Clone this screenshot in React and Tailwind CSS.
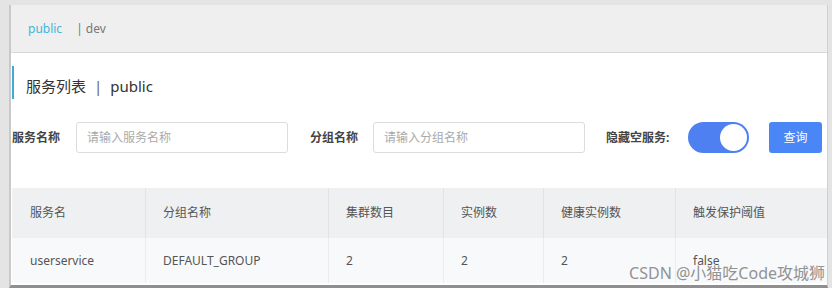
export default function App() {
  const font = { fontFamily: '"Noto Sans", "Noto Sans CJK SC", sans-serif' };
  const cols = [
    { w: 'w-[133px]', h: '服务名', v: 'userservice' },
    { w: 'w-[183px]', h: '分组名称', v: 'DEFAULT_GROUP' },
    { w: 'w-[115px]', h: '集群数目', v: '2' },
    { w: 'w-[100px]', h: '实例数', v: '2' },
    { w: 'w-[132px]', h: '健康实例数', v: '2' },
    { w: 'flex-1', h: '触发保护阈值', v: 'false' },
  ];
  return (
    <div className="w-[832px] h-[288px] bg-[#e4e4e4] pl-[9px] pt-[5px] pr-[4px] pb-0 overflow-hidden" style={font}>
      <div className="relative h-full overflow-hidden bg-white border-l-2 border-[#c9c9c9] border-b-[3px] border-b-[#8f8f8f] border-r border-r-[#d0d0d0] flex flex-col">
        <div className="h-[48px] shrink-0 bg-[#efefef] border-b border-[#d8d8d8] flex items-center pl-[17px] text-[12px]">
          <span className="text-[#3fb4d9]">public</span>
          <span className="ml-[14px] text-[#777]">| dev</span>
        </div>
        <div className="mt-[13px] shrink-0 flex items-stretch h-[33px]">
          <div className="w-[2px] bg-[#3fa9d8] ml-px"></div>
          <div className="pl-[12px] pt-[10px] text-[15px] text-[#333] leading-[20px]">
            服务列表<span className="mx-[8px] text-[#666]">|</span>public
          </div>
        </div>
        <div className="mt-[23px] shrink-0 flex items-center h-[31px] text-[12px]">
          <span className="ml-px w-[64px] font-bold text-[#444]">服务名称</span>
          <div className="w-[212px] h-[31px] border border-[#dcdcdc] rounded-[3px] flex items-center pl-[10px] text-[#aaa]">请输入服务名称</div>
          <span className="ml-[22px] w-[63px] font-bold text-[#444]">分组名称</span>
          <div className="w-[212px] h-[31px] border border-[#dcdcdc] rounded-[3px] flex items-center pl-[10px] text-[#aaa]">请输入分组名称</div>
          <span className="ml-[21px] w-[82px] font-bold text-[#444]">隐藏空服务:</span>
          <div className="w-[61px] h-[31px] rounded-full bg-[#4f80f2] flex items-center justify-end pr-[2px]">
            <div className="w-[27px] h-[27px] rounded-full bg-white"></div>
          </div>
          <div className="ml-[20px] w-[53px] h-[31px] rounded-[3px] bg-[#4a86f5] text-white flex items-center justify-center">查询</div>
        </div>
        <div className="mt-[35px] shrink-0 ml-px flex flex-col text-[12px] text-[#555]">
          <div className="flex h-[50px] bg-[#eff0f2]">
            {cols.map((c, i) => (
              <div key={i} className={`${c.w} flex items-center ${i === 0 ? 'pl-[18px]' : 'pl-[17px] border-l border-[#e2e3e5]'}`}>{c.h}</div>
            ))}
          </div>
          <div className="flex h-[45px] bg-[#f8f9fa]">
            {cols.map((c, i) => (
              <div key={i} className={`${c.w} flex items-center ${i === 0 ? 'pl-[18px]' : 'pl-[17px] border-l border-[#ebecee]'}`}>{c.v}</div>
            ))}
          </div>
        </div>
        <div className="absolute right-[2px] bottom-[4px] text-[16px] text-[#888] opacity-90 leading-none">CSDN @小猫吃Code攻城狮</div>
      </div>
    </div>
  );
}
